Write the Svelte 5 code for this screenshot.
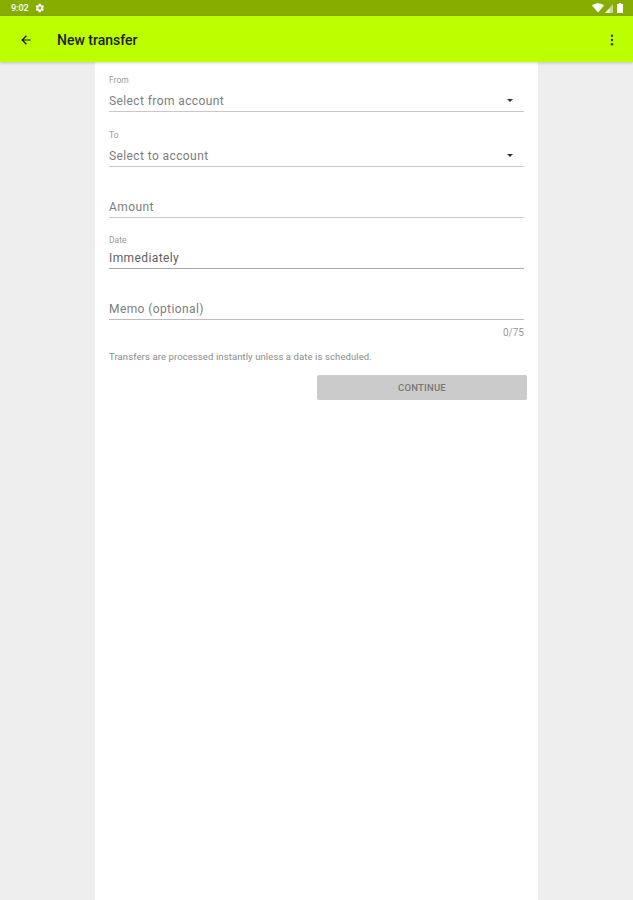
<script>
  const selects = [
    { label: 'From', placeholder: 'Select from account' },
    { label: 'To', placeholder: 'Select to account' }
  ];
</script>

<div class="screen">
  <div class="status-bar">
    <span class="time">9:02</span>
    <svg class="gear" width="10" height="10" viewBox="0 0 24 24">
      <path fill="#fff" d="M19.4 13c.1-.3.1-.7.1-1s0-.7-.1-1l2.1-1.6c.2-.2.2-.4.1-.6l-2-3.5c-.1-.2-.4-.3-.6-.2l-2.5 1c-.5-.4-1.100-.7-1.700-1L14 2.400c0-.2-.2-.4-.5-.4h-4c-.3 0-.5.2-.5.4l-.4 2.700c-.6.3-1.200.6-1.700 1l-2.500-1c-.2-.1-.5 0-.6.2l-2 3.500c-.1.2-.1.400.1.600L4 11c-.1.300-.1.700-.1 1s0 .7.1 1l-2.100 1.600c-.2.200-.2.400-.1.600l2 3.500c.1.200.4.300.6.200l2.500-1c.5.400 1.100.7 1.700 1l.4 2.700c0 .2.200.4.500.4h4c.3 0 .5-.2.500-.4l.4-2.700c.6-.3 1.200-.6 1.700-1l2.500 1c.2.100.5 0 .6-.2l2-3.500c.1-.2.1-.4-.1-.6L19.400 13zM11.700 15.500a3.500 3.500 0 1 1 0-7 3.500 3.500 0 0 1 0 7z"/>
    </svg>
    <span class="spacer"></span>
    <svg width="12" height="10" viewBox="0 0 12 10"><path fill="#fff" d="M0 2.500C3.500-.6 8.500-.6 12 2.500L6 9.500z"/></svg>
    <svg class="signal" width="8" height="9" viewBox="0 0 8 9"><path fill="#fff" fill-opacity="0.55" d="M8 0v9H0z"/><path fill="#fff" d="M4.500 4.500V9H0z"/></svg>
    <svg class="battery" width="6" height="10" viewBox="0 0 6 10"><path fill="#fff" d="M1.800 0h2.400v1H6v9H0V1h1.800z"/></svg>
  </div>

  <header class="toolbar">
    <svg class="back" width="14" height="14" viewBox="0 0 24 24">
      <path fill="#111" d="M20 11H7.800l5.600-5.600L12 4l-8 8 8 8 1.400-1.400L7.800 13H20z"/>
    </svg>
    <h1>New transfer</h1>
    <span class="spacer"></span>
    <svg class="more" width="4" height="12" viewBox="0 0 4 12">
      <circle cx="2" cy="1.700" r="1.200" fill="#333"/>
      <circle cx="2" cy="6" r="1.200" fill="#333"/>
      <circle cx="2" cy="10.300" r="1.200" fill="#333"/>
    </svg>
  </header>

  <main class="page">
    <form class="card">
      {#each selects as s}
        <div class="field select">
          <span class="label">{s.label}</span>
          <div class="value">
            <span>{s.placeholder}</span>
            <span class="caret"></span>
          </div>
        </div>
      {/each}

      <div class="field amount">
        <div class="value"><span>Amount</span></div>
      </div>

      <div class="field date">
        <span class="label">Date</span>
        <div class="value dark"><span>Immediately</span></div>
      </div>

      <div class="field memo">
        <div class="value"><span>Memo (optional)</span></div>
      </div>
      <div class="counter">0/75</div>

      <p class="hint">Transfers are processed instantly unless a date is scheduled.</p>

      <div class="actions">
        <button type="button" disabled>CONTINUE</button>
      </div>
    </form>
  </main>
</div>

<style>
  :global(body) {
    margin: 0;
    background: #eeeeee;
  }

  .screen {
    display: flex;
    flex-direction: column;
    height: 900px;
    font-family: Roboto, "Liberation Sans", sans-serif;
    overflow: hidden;
  }

  .status-bar {
    display: flex;
    align-items: center;
    flex: 0 0 16px;
    padding: 0 11px;
    gap: 5px;
    background: #86ad00;
    color: #fff;
  }

  .time {
    font-size: 9px;
    font-weight: 500;
  }

  .gear {
    margin-left: 1px;
  }

  .signal {
    margin-left: -4px;
  }

  .battery {
    margin-left: -1px;
    margin-right: -1px;
  }

  .spacer {
    flex: 1;
  }

  .toolbar {
    position: relative;
    z-index: 1;
    display: flex;
    align-items: center;
    flex: 0 0 46px;
    box-sizing: border-box;
    padding: 2px 19px 0;
    background: #bbff00;
    box-shadow: 0 1px 3px rgba(0, 0, 0, 0.2);
  }

  .back {
    flex: none;
  }

  h1 {
    margin: 0 0 0 24px;
    font-size: 14px;
    font-weight: 500;
    color: #1a1f00;
  }

  .page {
    flex: 1;
    display: flex;
    padding-left: 95px;
  }

  .card {
    width: 443px;
    box-sizing: border-box;
    padding: 13px 14px 0;
    background: #fff;
  }

  .field {
    display: flex;
    flex-direction: column;
  }

  .label {
    font-size: 8.500px;
    line-height: 10px;
    color: #9a9a9a;
  }

  .value {
    display: flex;
    align-items: center;
    justify-content: space-between;
    height: 21px;
    margin-top: 2px;
    border-bottom: 1px solid #c8c8c8;
    font-size: 12px;
    letter-spacing: 0.4px;
    color: #7d7d7d;
  }

  .select .value {
    margin-top: 5px;
  }

  .value.dark {
    color: #616161;
    border-bottom-color: #a8a8a8;
  }

  .select + .select {
    margin-top: 18px;
  }

  .amount {
    margin-top: 27px;
  }

  .date {
    margin-top: 17px;
  }

  .memo {
    margin-top: 27px;
  }

  .memo .value {
    border-bottom-color: #bdbdbd;
  }

  .caret {
    width: 0;
    height: 0;
    margin-right: 11px;
    border-left: 3px solid transparent;
    border-right: 3px solid transparent;
    border-top: 3px solid #333;
  }

  .counter {
    margin-top: 7px;
    font-size: 10px;
    line-height: 12px;
    text-align: right;
    color: #9a9a9a;
  }

  .hint {
    margin: 12px 0 0;
    font-size: 9.500px;
    line-height: 12px;
    letter-spacing: 0.1px;
    color: #8a8a8a;
  }

  .actions {
    display: flex;
    justify-content: flex-end;
    margin: 12px -3px 0 0;
  }

  button {
    width: 210px;
    height: 25px;
    padding: 0;
    border: 0;
    border-radius: 2px;
    background: #cbcbcb;
    font-family: inherit;
    font-size: 9.500px;
    font-weight: 500;
    letter-spacing: 0.2px;
    color: #777;
  }
</style>
